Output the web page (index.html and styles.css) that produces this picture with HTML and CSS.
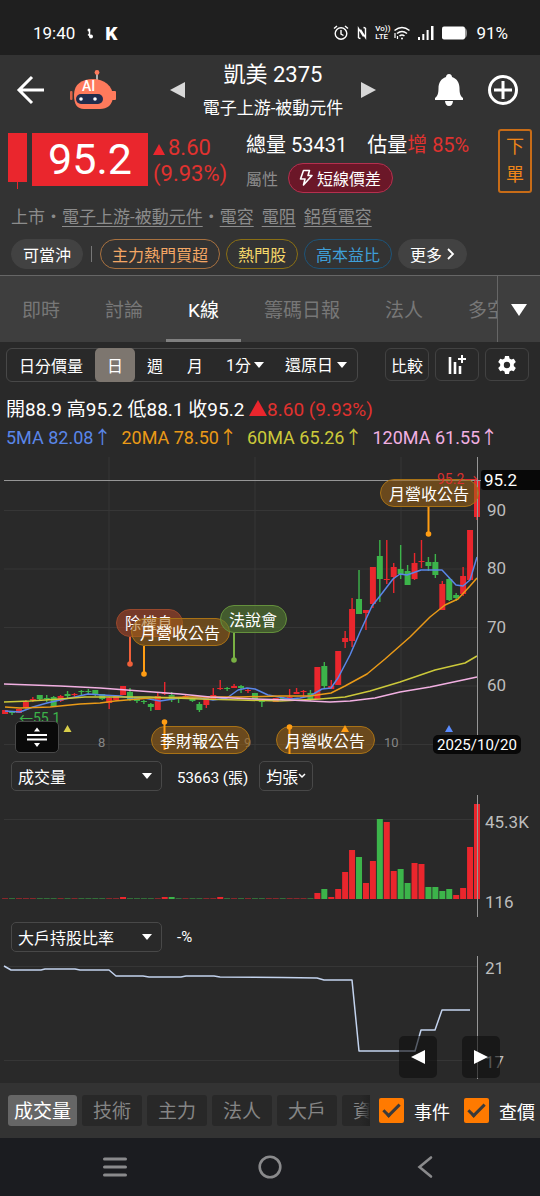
FILE: index.html
```html
<!DOCTYPE html>
<html lang="zh-Hant">
<head>
    <meta charset="UTF-8">
    <meta name="viewport" content="width=device-width, initial-scale=1.0">
    <title>凱美 2375</title>
    <link rel="stylesheet" href="styles.css">
</head>
<body>

    <div class="status-bar">
        <div class="status-left">
            <span>19:40</span>
            <svg width="8" height="14" viewBox="0 0 8 14"><circle cx="3" cy="4" r="1.500" fill="#fff"/><path d="M3.500 5v4M2 8.500l2 1.500" stroke="#fff" stroke-width="1.500" fill="none"/><circle cx="5" cy="10.500" r="2" fill="#fff"/></svg>
            <b class="status-k">K</b>
        </div>
        <div class="status-right">
            <svg width="16" height="16" viewBox="0 0 16 16" fill="none" stroke="#fff" stroke-width="1.400"><circle cx="8" cy="8.500" r="5.800"/><path d="M8 5v4l2.500 1.500M1 3.500L4 1M15 3.500L12 1"/></svg>
            <svg width="10" height="14" viewBox="0 0 10 14" fill="none" stroke="#fff" stroke-width="1.400"><path d="M1.500 12V2.500l5 8M3.500 12.500L1.500 12M8.500 2v9.500l-5-8M6.500 1.500l2 .5"/></svg>
            <span class="volte"><span>Vo))</span><span>LTE</span></span>
            <svg width="16" height="14" viewBox="0 0 16 14" fill="none" stroke="#fff" stroke-width="1.600"><path d="M.5 4.500Q8-1.500 15.500 4.500M3 7.500Q8 3.500 13 7.500M5.500 10Q8 8 10.500 10"/><circle cx="8" cy="12.500" r="1" fill="#fff" stroke="none"/><path d="M1 7v5M3.500 10v3" stroke-width="1.200"/></svg>
            <svg width="16" height="14" viewBox="0 0 16 14" fill="#fff"><rect x="0" y="11" width="2" height="3"/><rect x="4.300" y="8" width="2" height="6"/><rect x="8.600" y="4" width="2" height="10"/><rect x="13" y="0" width="2.500" height="14"/></svg>
            <svg width="26" height="14" viewBox="0 0 26 14"><rect x="0" y="0.500" width="23" height="13" rx="2" fill="#fff"/><path d="M23 2q2 1 2 5t-2 5z" fill="#999"/></svg>
            <span>91%</span>
        </div>
    </div>

    <header class="app-header">
        <div class="header-left">
            <button class="icon-btn" aria-label="返回">
                <svg width="30" height="30" viewBox="0 0 30 30" fill="none" stroke="#fff" stroke-width="3"><path d="M28 15H3M16 2L3 15l13 13"/></svg>
            </button>
            <button class="icon-btn" aria-label="AI 助理">
                <svg width="46" height="40" viewBox="0 0 46 40">
                    <path d="M27 4v6" stroke="#ddd" stroke-width="1.500"/>
                    <circle cx="27" cy="2.500" r="2.400" fill="#ff7a5c"/>
                    <rect x="0" y="21" width="2.500" height="9" rx="1" fill="#d9634a"/>
                    <rect x="40" y="21" width="6" height="9" rx="1" fill="#ff7a5c"/>
                    <path d="M4 25C4 14 12 9 23 9s20 7 20 17c0 9-6 13-13 13H14C7 39 4 34 4 25z" fill="#ff7a5c"/>
                    <rect x="6" y="24" width="27" height="10" rx="5" fill="#222c4c"/>
                    <circle cx="11" cy="29" r="1.800" fill="#fff"/>
                    <circle cx="25" cy="29" r="1.800" fill="#fff"/>
                    <text x="12" y="21" class="robot-text">AI</text>
                </svg>
            </button>
        </div>
        <div class="stock-switch">
            <button class="icon-btn" aria-label="上一檔"><svg width="16" height="16" viewBox="0 0 16 16"><path d="M0 8L15 0v16z" fill="#d8d8d8"/></svg></button>
            <div class="stock-title">
                <h1>凱美 2375</h1>
                <p>電子上游-被動元件</p>
            </div>
            <button class="icon-btn" aria-label="下一檔"><svg width="16" height="16" viewBox="0 0 16 16"><path d="M16 8L1 0v16z" fill="#d8d8d8"/></svg></button>
        </div>
        <div class="header-right">
            <button class="icon-btn" aria-label="通知">
                <svg width="30" height="32" viewBox="0 0 30 32" fill="#fff"><path d="M15 0c2 0 3 1.500 3 3 5 1.500 7.500 6 7.500 11 0 6 1 8 3.500 10v2H1v-2c2.500-2 3.500-4 3.500-10 0-5 2.500-9.500 7.500-11 0-1.500 1-3 3-3z"/><path d="M11 27h8q-.5 5-4 5t-4-5z"/></svg>
            </button>
            <button class="icon-btn" aria-label="加入">
                <svg width="30" height="32" viewBox="0 0 30 32" fill="none" stroke="#fff" stroke-width="3"><circle cx="15" cy="16" r="13.500"/><path d="M15 7v18M6 16h18"/></svg>
            </button>
        </div>
    </header>

    <section class="summary">
        <div class="quote">
            <div class="price">
                <svg width="19" height="56" viewBox="0 0 19 56" fill="#ea262d"><rect width="19" height="49"/><rect x="9" y="49" width="1" height="7"/></svg>
                <div class="price-box">95.2</div>
                <div class="change">
                    <div><i class="tri-up"></i>8.60</div>
                    <div>(9.93%)</div>
                </div>
            </div>
            <div class="volume-info">
                <div class="volume-line">
                    <span>總量 53431</span>
                    <span>估量<em>增 85%</em></span>
                </div>
                <div class="attr-line">
                    <span>屬性</span>
                    <a href="#" class="attr-badge">
                        <svg width="14" height="18" viewBox="0 0 14 18" fill="none" stroke="#fff" stroke-width="1.600" stroke-linejoin="round"><path d="M4.500 1.500h6L9 6.500h4L4.500 16 6 10H1.500z"/></svg>
                        短線價差
                    </a>
                </div>
            </div>
            <button class="order-btn"><span>下</span><span>單</span></button>
        </div>

        <div class="category">
            <span>上市</span><span>・</span><a href="#">電子上游-被動元件</a><span>・</span>
            <a href="#">電容</a>
            <a href="#">電阻</a>
            <a href="#">鋁質電容</a>
        </div>

        <div class="chips">
            <a href="#" class="chip">可當沖</a>
            <i class="chip-divider"></i>
            <a href="#" class="chip chip-orange">主力熱門買超</a>
            <a href="#" class="chip chip-yellow">熱門股</a>
            <a href="#" class="chip chip-blue">高本益比</a>
            <a href="#" class="chip">更多 <svg width="8" height="12" viewBox="0 0 8 12" fill="none" stroke="#fff" stroke-width="1.800"><path d="M1 1l5 5-5 5"/></svg></a>
        </div>
    </section>

    <nav class="tabs">
        <div class="tab-list">
            <a href="#">即時</a>
            <a href="#">討論</a>
            <a href="#" class="active">K線</a>
            <a href="#">籌碼日報</a>
            <a href="#">法人</a>
            <a href="#">多空</a>
        </div>
        <button class="tab-more" aria-label="更多分頁"><i class="tri-down"></i></button>
    </nav>

    <main>
        <div class="toolbar">
            <div class="period">
                <button>日分價量</button>
                <button class="active">日</button>
                <button>週</button>
                <button>月</button>
                <label class="period-select minute"><select aria-label="分鐘"><option>1分</option></select></label>
                <label class="period-select restore"><select aria-label="還原"><option>還原日</option></select></label>
            </div>
            <div class="tools">
                <button>比較</button>
                <button aria-label="指標">
                    <svg width="20" height="22" viewBox="0 0 20 22" fill="none" stroke="#fff"><path d="M3 3v17M8 8v12M13 12v8" stroke-width="2.600"/><path d="M15 1v8M11 5h8" stroke-width="2"/></svg>
                </button>
                <button aria-label="設定">
                    <svg width="20" height="20" viewBox="0 0 20 20"><path fill="#fff" fill-rule="evenodd" d="M8 1h4l.5 2.600 1.800 1 2.500-.9 2 3.400-2 1.800v2.200l2 1.800-2 3.400-2.500-.9-1.800 1L12 19H8l-.5-2.600-1.800-1-2.500.9-2-3.400 2-1.800V8.900l-2-1.800 2-3.400 2.500.9 1.800-1zM10 6.800a3.200 3.200 0 100 6.400 3.200 3.200 0 000-6.400z"/></svg>
                </button>
            </div>
        </div>

        <div class="ohlc">開88.9 高95.2 低88.1 收95.2 <i class="tri-up tri-big"></i><span class="red">8.60 (9.93%)</span></div>
        <div class="ma">
            <span class="ma5">5MA 82.08↑</span>
            <span class="ma20">20MA 78.50↑</span>
            <span class="ma60">60MA 65.26↑</span>
            <span class="ma120">120MA 61.55↑</span>
        </div>

        <div class="chart-wrap">
            <svg class="chart" viewBox="0 452 540 304">
                <path class="grid" d="M4 510.500H478M4 569H478M4 627.500H478M4 686H478M4 744.500H478M109 457V750M255 457V750M401 457V750"/>
                <g id="candles"></g>
                <polyline class="line ma5-line" points="5,711 20,712 33,707 47,703 60,700 75,697 88,694 102,695 120,696 130,698 144,698 160,701 180,698 200,698 213,700 227,698 238,690 247,688 255,689 268,695 290,699 300,698 310,696 322,689 331,688 338,678 350,655 360,632 372,606 380,596 393,579 400,574 407,575 421,570 442,570 456,585 463,586 470,580 477,557"/>
                <polyline class="line ma20-line" points="5,707 20,708 50,707 80,704 100,703 115,701 150,698 190,697 240,697 280,696 310,696 331,693 345,686 367,674 385,659 410,637 430,617 445,605 458,599 470,586 477,578"/>
                <polyline class="line ma60-line" points="4,702 30,701 60,699 85,697 120,697 150,697 200,699 240,700 280,701 320,699 345,697 370,691 400,682 435,670 465,663 477,656"/>
                <polyline class="line ma120-line" points="4,684 60,686 100,688 140,691 180,694 210,697 255,699 290,700 330,702 350,701 375,698 400,692 430,687 463,680 477,677"/>

                <path class="cross" d="M4 480.500H481M477.500 457V736"/>

                <text x="19" y="723" class="low-label">←55.1</text>

                <text x="487" y="516" class="axis">90</text>
                <text x="487" y="574" class="axis">80</text>
                <text x="487" y="633" class="axis">70</text>
                <text x="487" y="691" class="axis">60</text>
                <text x="98" y="747" class="month">8</text>
                <text x="244" y="747" class="month">9</text>
                <text x="384" y="747" class="month">10</text>

                <g class="event event-red">
                    <rect x="116.500" y="609.500" width="66" height="27" rx="13.500"/>
                    <path d="M130 637v27"/><circle cx="130" cy="664" r="2.800"/>
                    <text x="125" y="629">除權息</text>
                </g>
                <g class="event event-orange">
                    <rect x="131.500" y="618.500" width="98" height="27" rx="13.500"/>
                    <path d="M144 646v28"/><circle cx="144" cy="674" r="2.800"/>
                    <text x="140" y="639">月營收公告</text>
                </g>
                <g class="event event-green">
                    <rect x="220.500" y="605.500" width="66" height="27" rx="13.500"/>
                    <path d="M234 633v27"/><circle cx="234" cy="660" r="2.800"/>
                    <text x="229" y="626">法說會</text>
                </g>
                <g class="event event-orange">
                    <rect x="380.500" y="479.500" width="98" height="27" rx="13.500"/>
                    <path d="M428.500 507v27"/><circle cx="428.500" cy="534" r="2.800"/>
                    <text x="389" y="500">月營收公告</text>
                </g>
                <g class="event event-orange">
                    <rect x="151.500" y="726.500" width="98" height="27" rx="13.500"/>
                    <path d="M164.500 722v28"/><circle cx="164.500" cy="722" r="2.800"/>
                    <text x="160" y="747">季財報公告</text>
                </g>
                <g class="event event-orange">
                    <rect x="276.500" y="726.500" width="98" height="27" rx="13.500"/>
                    <path d="M289.500 727v27"/><circle cx="289.500" cy="727" r="2.800"/>
                    <text x="285" y="747">月營收公告</text>
                </g>

                <text x="437" y="484" class="high-label">95.2→</text>

                <path d="M63.500 732l4-7 4 7z" fill="#d9cf4a"/>
                <path d="M341 732l4-7 4 7z" fill="#ff9d13"/>
                <path d="M445 732l4-7 4 7z" fill="#5a8cff"/>

                <rect x="481" y="470" width="62" height="20" rx="3" fill="#080808"/>
                <text x="484" y="486" class="tip tip-price">95.2</text>
                <rect x="433" y="735" width="88" height="19" rx="5" fill="#080808"/>
                <text x="477" y="750" class="tip tip-date">2025/10/20</text>
            </svg>
            <button class="resize-btn" aria-label="調整高度">
                <svg width="22" height="22" viewBox="0 0 22 22"><path d="M1 9h20M1 13.500h20" stroke="#fff" stroke-width="2"/><path d="M8 5.500l3-4 3 4zM8 17l3 4 3-4z" fill="#fff"/></svg>
            </button>
        </div>

        <div class="indicator-bar">
            <label class="indicator-select"><select aria-label="副圖一"><option>成交量</option><option>大戶持股比率</option></select></label>
            <span class="indicator-value">53663 (張)</span>
            <button class="avg-btn">均張<svg width="8" height="6" viewBox="0 0 8 6" fill="none" stroke="#fff" stroke-width="1.500"><path d="M1 1l3 3 3-3"/></svg></button>
        </div>
        <svg class="chart" viewBox="0 795 540 122">
            <path class="grid" d="M4 819.500H478"/>
            <g id="volumes"></g>
            <path class="cross" d="M477.500 795V917"/>
            <text x="485" y="828" class="axis">45.3K</text>
            <text x="485" y="908" class="axis">116</text>
        </svg>

        <div class="indicator-bar">
            <label class="indicator-select"><select aria-label="副圖二"><option>大戶持股比率</option><option>成交量</option></select></label>
            <span class="indicator-value">-%</span>
        </div>
        <div class="chart-wrap">
            <svg class="chart" viewBox="0 956 540 127">
                <path class="grid" d="M4 966.500H478M4 1060.500H478"/>
                <polyline class="line holder-line" points="4,966 11,970 41,970 45,969 75,969 80,970 109,970 116,976 143,976 149,977 181,977 186,976 214,976 220,977 282,977.500 317,978 324,980 352,980 359,1051 415,1051 421,1030 435,1030 442,1010 470,1010"/>
                <path class="cross" d="M477.500 956V1079"/>
                <text x="485" y="974" class="axis">21</text>
                <text x="485" y="1068" class="axis">17</text>
            </svg>
            <div class="pager">
                <button aria-label="往前"><svg width="14" height="14" viewBox="0 0 14 14"><path d="M0 7l14-7v14z" fill="#fff"/></svg></button>
                <button aria-label="往後"><svg width="14" height="14" viewBox="0 0 14 14"><path d="M14 7L0 0v14z" fill="#fff"/></svg></button>
            </div>
        </div>
    </main>

    <footer class="bottom-bar">
        <div class="groups">
            <button class="active">成交量</button>
            <button>技術</button>
            <button>主力</button>
            <button>法人</button>
            <button>大戶</button>
            <button>資券</button>
        </div>
        <div class="checks">
            <label><input type="checkbox" checked>事件</label>
            <label><input type="checkbox" checked>查價</label>
        </div>
    </footer>

    <div class="system-nav">
        <button class="icon-btn" aria-label="最近使用"><svg width="24" height="22" viewBox="0 0 24 22" stroke="#8a8a8c" stroke-width="3" stroke-linecap="round"><path d="M1.500 3h21M1.500 11h21M1.500 19h21"/></svg></button>
        <button class="icon-btn" aria-label="主畫面"><svg width="24" height="26" viewBox="0 0 24 26" fill="none" stroke="#8a8a8c" stroke-width="2.600"><circle cx="12" cy="13" r="10.300"/></svg></button>
        <button class="icon-btn" aria-label="上一頁"><svg width="24" height="24" viewBox="0 0 24 24" fill="none" stroke="#8a8a8c" stroke-width="2.600" stroke-linecap="round"><path d="M18 2.500L6.500 12 18 21.500"/></svg></button>
    </div>

    <script src="chart.js"></script>
</body>
</html>
```

FILE: styles.css
```css
* {
    box-sizing: border-box;
}

body {
    margin: 0;
    min-height: 100vh;
    display: flex;
    flex-direction: column;
    background-color: #292929;
    color: #fff;
    font-family: Roboto, "Noto Sans CJK TC", sans-serif;
    font-size: 16px;
    overflow-x: hidden;
}

button, select, input {
    font: inherit;
    color: inherit;
    margin: 0;
    padding: 0;
    border: 0;
    background: none;
}

a {
    color: inherit;
    text-decoration: none;
}

svg {
    display: block;
    flex: none;
}

.icon-btn {
    display: flex;
}

.red {
    color: #e0322f;
}

.tri-up {
    display: inline-block;
    border: 6px solid transparent;
    border-top: 0;
    border-bottom: 11px solid #ea262d;
}

.tri-big {
    border-width: 0 9px 16px;
}

.tri-down {
    display: inline-block;
    border: 8px solid transparent;
    border-bottom: 0;
    border-top: 12px solid #fff;
}

/* status bar */
.status-bar {
    height: 55px;
    padding: 11px 32px 0 33px;
    display: flex;
    align-items: center;
    justify-content: space-between;
    background-color: #1f1f1f;
    font-size: 17px;
}

.status-left {
    display: flex;
    align-items: center;
    gap: 11px;
}

.status-k {
    font-size: 19px;
    font-weight: 900;
}

.status-right {
    display: flex;
    align-items: center;
    gap: 8px;
}

.volte {
    display: flex;
    flex-direction: column;
    font-size: 8px;
    line-height: 8px;
    font-weight: 500;
    margin-right: -4px;
}

/* header */
.app-header {
    padding: 0 10px 0 16px;
    display: grid;
    grid-template-columns: 1fr auto 1fr;
    align-items: center;
    background-color: #333;
}

.header-left, .header-right {
    display: flex;
    align-items: center;
    gap: 24px;
}

.header-right {
    justify-content: flex-end;
    padding-right: 12px;
}

.robot-text {
    fill: #fff;
    font-size: 14px;
    font-weight: 500;
}

.stock-switch {
    display: flex;
    align-items: center;
    gap: 17px;
}

.stock-title {
    padding-top: 4px;
    text-align: center;
}

.stock-title h1 {
    margin: 0;
    font-size: 22px;
    line-height: 32px;
    font-weight: 400;
}

.stock-title p {
    margin: 0;
    font-size: 17px;
    line-height: 34px;
}

/* quote */
.summary {
    padding: 4px 8px 6px;
    background-color: #333;
    border-bottom: 1px solid #666;
}

.quote {
    display: flex;
}

.price {
    display: flex;
    gap: 5px;
    padding-top: 4px;
    width: 238px;
}

.price-box {
    width: 116px;
    height: 53px;
    line-height: 53px;
    text-align: center;
    font-size: 43px;
    background-color: #ea262d;
}

.change {
    color: #e0322f;
    font-size: 22px;
    line-height: 26px;
    padding-top: 2px;
}

.change .tri-up {
    margin-right: 3px;
}

.volume-line {
    display: flex;
    gap: 20px;
    height: 32px;
    line-height: 32px;
    font-size: 20px;
}

.volume-line em {
    font-style: normal;
    color: #e0322f;
}

.attr-line {
    display: flex;
    align-items: center;
    gap: 10px;
    margin-top: 2px;
    color: #8c8c8c;
}

.attr-badge {
    display: flex;
    align-items: center;
    gap: 4px;
    height: 30px;
    padding: 0 11px 0 10px;
    border: 1px solid #b5304f;
    border-radius: 15px;
    background-color: #6b1728;
    color: #fff;
}

.order-btn {
    margin-left: auto;
    width: 34px;
    height: 64px;
    display: flex;
    flex-direction: column;
    align-items: center;
    justify-content: center;
    border: 2px solid #c86c17;
    border-radius: 3px;
    color: #f08519;
    font-size: 18px;
    line-height: 28px;
}

.category {
    display: flex;
    gap: 0 8px;
    margin-top: 10px;
    padding-left: 3px;
    font-size: 17px;
    line-height: 28px;
    color: #8c8c8c;
}

.category span + span, .category a + span {
    margin: 0 -8px;
}

.category a {
    text-decoration: underline;
    text-underline-offset: 3px;
}

.chips {
    display: flex;
    align-items: center;
    gap: 6px;
    margin-top: 8px;
    padding-left: 3px;
}

.chip {
    display: flex;
    align-items: center;
    gap: 5px;
    height: 30px;
    padding: 0 11px;
    border: 1px solid #424242;
    border-radius: 15px;
    background-color: #424242;
}

.chip-orange {
    color: #f4a765;
    border-color: #a8713f;
    background: none;
}

.chip-yellow {
    color: #f5d86a;
    border-color: #8a6f14;
    background: none;
}

.chip-blue {
    color: #3f9fd9;
    border-color: #1d5479;
    background: none;
}

.chip-divider {
    width: 1px;
    height: 16px;
    margin: 0 2px;
    background-color: #777;
}

/* tabs */
.tabs {
    display: flex;
    height: 66px;
    background-color: #3e3e3e;
    font-size: 19px;
}

.tab-list {
    flex: 1;
    min-width: 0;
    display: flex;
    gap: 1px;
    overflow: hidden;
    white-space: nowrap;
}

.tab-list a {
    flex: none;
    padding: 0 22px;
    line-height: 70px;
    color: #777;
}

.tab-list .active {
    color: #fff;
    box-shadow: inset 0 -3px #808080;
}

.tab-more {
    width: 43px;
    border-left: 1px solid #666;
}

/* toolbar */
.toolbar {
    display: flex;
    justify-content: space-between;
    padding: 6px 11px 0 6px;
}

.period {
    display: flex;
    height: 34px;
    border: 1px solid #484848;
    border-radius: 6px;
}

.period button {
    padding: 0 12px;
}

.period .active {
    margin: -1px 0;
    border-radius: 5px;
    background-color: #7d766f;
}

.period-select, .indicator-select {
    position: relative;
    display: flex;
}

.period-select select, .indicator-select select {
    appearance: none;
    width: 100%;
}

.period-select::after, .indicator-select::after {
    content: "";
    position: absolute;
    right: 10px;
    top: 13px;
    border: 5px solid transparent;
    border-bottom: 0;
    border-top: 6px solid #fff;
    pointer-events: none;
}

.period-select select {
    padding-left: 11px;
}

.minute {
    width: 59px;
}

.restore {
    width: 83px;
}

.tools {
    display: flex;
    gap: 6px;
}

.tools button {
    display: flex;
    align-items: center;
    justify-content: center;
    width: 44px;
    height: 33px;
    border: 1px solid #424242;
    border-radius: 6px;
}

.ohlc, .ma {
    padding-left: 6px;
    line-height: 28px;
    white-space: nowrap;
}

.ohlc {
    margin-top: 14px;
    font-size: 19px;
}

.ma {
    display: flex;
    gap: 10px;
    font-size: 18px;
}

.ma5 {
    color: #5a86e8;
}

.ma20 {
    color: #ea9a17;
}

.ma60 {
    color: #ccc93a;
}

.ma120 {
    color: #f2b0e2;
}

/* charts */
.chart-wrap {
    position: relative;
}

.chart {
    width: 100%;
    height: auto;
}

.grid {
    stroke: #363636;
    fill: none;
}

.cross {
    stroke: #969696;
    fill: none;
}

.up {
    fill: #ea262d;
}

.down {
    fill: #3cb44a;
}

.quiet {
    opacity: 0.5;
}

.line {
    fill: none;
    stroke-width: 1.5;
    stroke-linejoin: round;
}

.ma5-line {
    stroke: #5a86e8;
}

.ma20-line {
    stroke: #ea9a17;
}

.ma60-line {
    stroke: #ccc93a;
}

.ma120-line {
    stroke: #f2b0e2;
}

.holder-line {
    stroke: #c3d3ee;
}

.axis {
    fill: #bdbdbd;
    font-size: 17px;
}

.month {
    fill: #858585;
    font-size: 13px;
}

.high-label {
    fill: #d9302f;
    font-size: 14px;
}

.low-label {
    fill: #3cb44a;
    font-size: 14px;
}

.event text {
    fill: #fff;
    font-size: 16px;
}

.event path {
    stroke-width: 2;
}

.event-orange rect {
    fill: rgba(160, 100, 20, 0.55);
    stroke: #a87216;
}

.event-orange path {
    stroke: #ff9d13;
}

.event-orange circle {
    fill: #ff9d13;
}

.event-red rect {
    fill: rgba(170, 70, 40, 0.6);
    stroke: #99482c;
}

.event-red path {
    stroke: #f0603a;
}

.event-red circle {
    fill: #f0603a;
}

.event-green rect {
    fill: rgba(85, 125, 50, 0.6);
    stroke: #64903c;
}

.event-green path {
    stroke: #79b043;
}

.event-green circle {
    fill: #79b043;
}

.tip {
    fill: #fff;
}

.tip-price {
    font-size: 17px;
}

.tip-date {
    font-size: 15px;
    text-anchor: middle;
}

.resize-btn {
    position: absolute;
    left: 15px;
    bottom: 3px;
    width: 44px;
    height: 32px;
    display: flex;
    align-items: center;
    justify-content: center;
    border: 1px solid #484848;
    border-radius: 5px;
    background-color: #0a0a0a;
}

.indicator-bar {
    display: flex;
    align-items: center;
    padding: 5px 11px 4px;
    height: 39px;
}

.indicator-select {
    width: 151px;
    height: 30px;
    margin-right: 15px;
    border: 1px solid #484848;
    border-radius: 5px;
}

.indicator-select select {
    padding: 2px 0 0 6px;
}

.indicator-select::after {
    top: 11px;
    right: 9px;
}

.indicator-value {
    font-size: 15px;
}

.avg-btn {
    display: flex;
    align-items: center;
    height: 30px;
    margin-left: 11px;
    padding: 0 6px;
    border: 1px solid #484848;
    border-radius: 5px;
}

.pager {
    position: absolute;
    right: 40px;
    bottom: 5px;
    display: flex;
    gap: 25px;
}

.pager button {
    display: flex;
    align-items: center;
    justify-content: center;
    width: 38px;
    height: 42px;
    border-radius: 5px;
    background-color: rgba(14, 14, 14, 0.6);
}

/* bottom bar */
.bottom-bar {
    display: flex;
    align-items: center;
    height: 55px;
    margin-top: auto;
    background-color: #333;
}

.groups {
    position: relative;
    flex: 1;
    min-width: 0;
    display: flex;
    gap: 5px;
    padding-left: 8px;
    overflow: hidden;
    white-space: nowrap;
}

.groups::after {
    content: "";
    position: absolute;
    top: 0;
    right: 0;
    bottom: 0;
    width: 10px;
    background: linear-gradient(to right, transparent, #222);
}

.groups button {
    flex: none;
    height: 31px;
    padding: 3px 11px 0;
    border-radius: 3px;
    background-color: #282828;
    color: #858585;
    font-size: 19px;
    line-height: 28px;
}

.groups .active {
    padding: 3px 6px 0;
    background-color: #666;
    color: #fff;
}

.checks {
    display: flex;
    gap: 14px;
    padding: 0 5px 0 9px;
    font-size: 18px;
}

.checks label {
    display: flex;
    align-items: center;
    gap: 10px;
}

.checks input {
    appearance: none;
    display: flex;
    justify-content: center;
    width: 25px;
    height: 25px;
    border-radius: 2px;
    background-color: #777;
}

.checks input:checked {
    background-color: #ff7a00;
}

.checks input:checked::before {
    content: "";
    width: 6px;
    height: 14px;
    margin-top: 2px;
    border: solid #3a3a3a;
    border-width: 0 3px 3px 0;
    transform: rotate(45deg);
}

/* system navigation */
.system-nav {
    display: flex;
    align-items: center;
    justify-content: space-between;
    height: 58px;
    padding: 0 19%;
    background-color: #1b1c20;
}
```

FILE: chart.js
```js
// one row per day: body top, body bottom, wick top, wick bottom, 1 = up / 0 = down
var candles = [
    [710, 714, 710, 714, 1], [712, 713, 711, 715, 0], [709, 713, 709, 713, 1], [702, 708, 700, 709, 1],
    [699, 700, 697, 702, 1], [695, 699, 695, 700, 0], [698, 699, 695, 702, 0], [697, 706, 696, 707, 0],
    [696, 701, 695, 702, 1], [694, 696, 691, 698, 0], [694, 695, 693, 697, 1], [691, 692, 690, 695, 0],
    [691, 692, 689, 695, 0], [690, 694, 690, 696, 0], [694, 699, 694, 700, 0], [698, 703, 697, 709, 1],
    [696, 700, 696, 701, 1], [686, 695, 686, 695, 1], [692, 700, 688, 701, 0], [697, 701, 697, 703, 0],
    [701, 702, 700, 704, 0], [704, 707, 703, 711, 0], [696, 710, 692, 710, 1], [693, 694, 682, 695, 1],
    [695, 700, 692, 702, 0], [698, 699, 697, 703, 0], [696, 698, 695, 698, 1], [698, 701, 697, 702, 0],
    [704, 710, 702, 712, 0], [697, 705, 697, 708, 1], [695, 699, 688, 699, 1], [688, 689, 680, 690, 1],
    [688, 689, 687, 691, 0], [686, 688, 684, 688, 1], [686, 688, 685, 693, 0], [690, 691, 688, 693, 1],
    [693, 699, 693, 699, 0], [700, 702, 700, 707, 0], [699, 701, 699, 701, 1], [698, 702, 698, 702, 1],
    [698, 699, 697, 701, 0], [697, 699, 689, 700, 1], [692, 694, 688, 694, 1], [691, 692, 690, 697, 1],
    [693, 700, 690, 701, 0], [667, 699, 667, 699, 1], [666, 686, 662, 689, 0], [686, 689, 680, 689, 1],
    [651, 685, 651, 685, 1], [638, 642, 631, 648, 1], [609, 641, 598, 647, 1], [599, 614, 570, 614, 0],
    [610, 613, 610, 630, 1], [567, 604, 567, 608, 1], [556, 579, 540, 602, 0], [579, 580, 540, 584, 1],
    [567, 577, 563, 593, 1], [569, 574, 545, 579, 0], [571, 585, 565, 585, 0], [563, 579, 553, 580, 1],
    [561, 562, 540, 568, 1], [562, 566, 557, 571, 0], [562, 575, 554, 578, 0], [584, 610, 581, 610, 1],
    [579, 600, 577, 601, 0], [595, 598, 593, 601, 0], [576, 594, 567, 596, 1], [530, 580, 530, 580, 1],
    [480, 517, 480, 520, 1]
];

// bar height and direction, starting at the first busy day
var busyStart = 45;
var volumes = [
    [6, 1], [10, 0], [2, 1], [10, 1], [27, 1], [49, 1], [42, 0], [16, 1],
    [38, 1], [80, 0], [77, 1], [28, 1], [30, 0], [16, 0], [36, 1], [35, 1],
    [12, 0], [12, 0], [8, 0], [10, 0], [4, 1], [11, 1], [52, 1], [95, 1]
];

function addRect(parent, x, y, width, height, name) {
    var rect = document.createElementNS('http://www.w3.org/2000/svg', 'rect');
    rect.setAttribute('x', x);
    rect.setAttribute('y', y);
    rect.setAttribute('width', width);
    rect.setAttribute('height', height);
    rect.setAttribute('class', name);
    parent.appendChild(rect);
}

function dayX(i) {
    return 477 - (68 - i) * 6.94;
}

var candleGroup = document.getElementById('candles');
var volumeGroup = document.getElementById('volumes');

candles.forEach(function (c, i) {
    var name = c[4] ? 'up' : 'down';
    var x = dayX(i);
    addRect(candleGroup, x - 0.7, c[2], 1.4, c[3] - c[2], name);
    addRect(candleGroup, x - 3, c[0], 6, c[1] - c[0], name);
    if (i < busyStart) {
        var tall = [17, 23, 24, 31].indexOf(i) >= 0;
        addRect(volumeGroup, x - 3, tall ? 897 : 898, 6, tall ? 2 : 1, tall ? name : name + ' quiet');
    }
});

volumes.forEach(function (v, i) {
    addRect(volumeGroup, dayX(busyStart + i) - 3, 899 - v[0], 6, v[0], v[1] ? 'up' : 'down');
});
```
